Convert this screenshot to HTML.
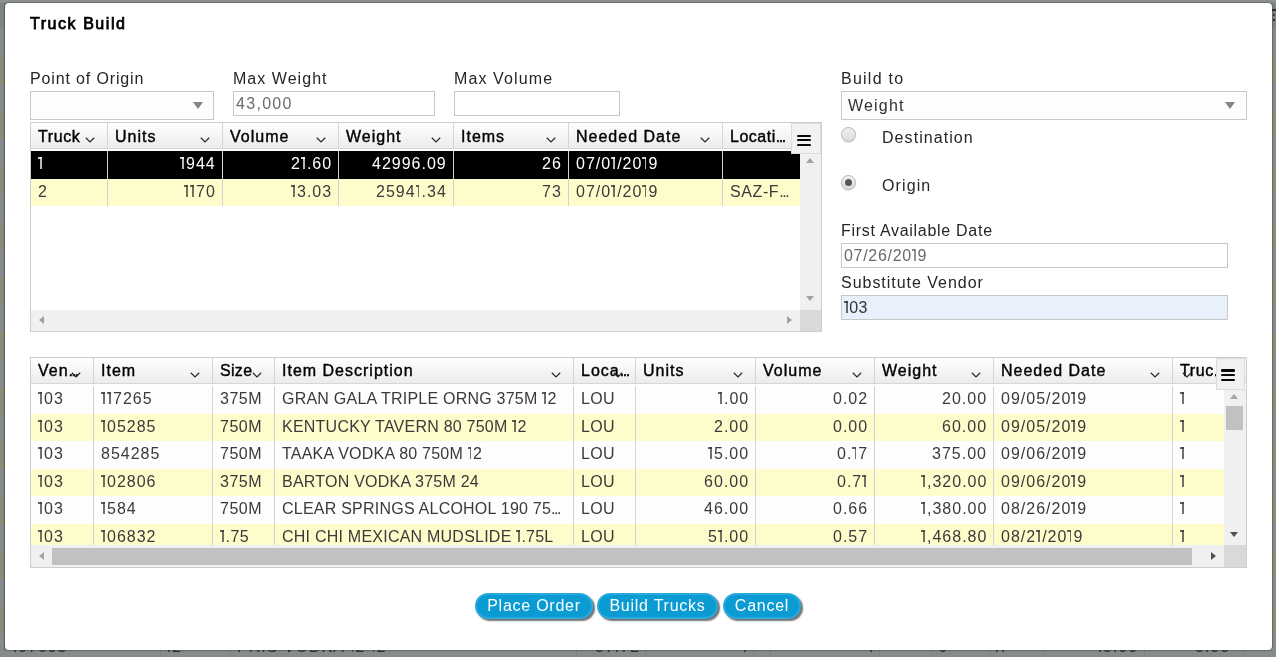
<!DOCTYPE html><html><head><meta charset="utf-8"><title>Truck Build</title><style>
*{box-sizing:border-box;margin:0;padding:0}
html,body{width:1276px;height:657px;overflow:hidden}
body{position:relative;background:#868b8c;font-family:"Liberation Sans", sans-serif;font-size:16px;color:#333}
.abs{position:absolute}
.bgrow{position:absolute;left:0;width:1276px}
.modal{position:absolute;left:5px;top:3px;width:1267px;height:647px;background:#fff;border-radius:4px;box-shadow:0 0 1px 0.5px rgba(40,45,46,.35)}
.t{will-change:transform;position:absolute;white-space:nowrap;line-height:18px;height:18px}
.lbl{color:#262626}
.inp{position:absolute;border:1px solid #c8c8c8;background:#fdfdfd}
.tri{position:absolute;width:0;height:0;border-left:5px solid transparent;border-right:5px solid transparent;border-top:7px solid #858585}
.hd{color:#000;-webkit-text-stroke:0.4px #000;letter-spacing:1.0px}
.sb{position:absolute;background:#f0f0f0}
.menu{position:absolute;background:#f1f1f1;border:1px solid #dcdcdc}
.btn{position:absolute;top:593px;height:26px;border-radius:13px;background:#0a9bd3;border:2px solid #2aa9dc;box-shadow:2px 2px 1.5px rgba(70,70,70,.75);color:#fff;line-height:22px;text-align:center;letter-spacing:0.75px;white-space:nowrap}
.d1{display:inline-block;position:relative;width:5.0px;height:11.6px;margin-right:var(--ls,1px)}
.d1::before{content:'';position:absolute;left:2.2px;top:0;width:1.45px;height:11.6px;background:currentColor;opacity:.72}
.d1::after{content:'';position:absolute;left:0;top:0;width:3.6px;height:1.2px;background:currentColor;opacity:.8}
</style></head><body><div class="bgrow" style="top:0;height:3px;background:#8c9192"></div><div class="bgrow" style="top:3px;height:25.5px;background:#7e8384"></div><div class="bgrow" style="top:28.5px;height:1px;background:#757a7b"></div><div class="bgrow" style="top:29.00px;height:27.5px;background:#868b8c"></div><div class="bgrow" style="top:56.50px;height:27.5px;background:#898b76"></div><div class="bgrow" style="top:84.00px;height:27.5px;background:#868b8c"></div><div class="bgrow" style="top:111.50px;height:27.5px;background:#898b76"></div><div class="bgrow" style="top:139.00px;height:27.5px;background:#868b8c"></div><div class="bgrow" style="top:166.50px;height:27.5px;background:#898b76"></div><div class="bgrow" style="top:194.00px;height:27.5px;background:#868b8c"></div><div class="bgrow" style="top:221.50px;height:27.5px;background:#898b76"></div><div class="bgrow" style="top:249.00px;height:27.5px;background:#868b8c"></div><div class="bgrow" style="top:276.50px;height:27.5px;background:#898b76"></div><div class="bgrow" style="top:304.00px;height:27.5px;background:#868b8c"></div><div class="bgrow" style="top:331.50px;height:27.5px;background:#898b76"></div><div class="bgrow" style="top:359.00px;height:27.5px;background:#868b8c"></div><div class="bgrow" style="top:386.50px;height:27.5px;background:#898b76"></div><div class="bgrow" style="top:414.00px;height:27.5px;background:#868b8c"></div><div class="bgrow" style="top:441.50px;height:27.5px;background:#898b76"></div><div class="bgrow" style="top:469.00px;height:27.5px;background:#868b8c"></div><div class="bgrow" style="top:496.50px;height:27.5px;background:#898b76"></div><div class="bgrow" style="top:524.00px;height:27.5px;background:#868b8c"></div><div class="bgrow" style="top:551.50px;height:27.5px;background:#898b76"></div><div class="bgrow" style="top:579.00px;height:27.5px;background:#868b8c"></div><div class="bgrow" style="top:606.50px;height:27.5px;background:#898b76"></div><div class="bgrow" style="top:634.00px;height:27.5px;background:#868b8c"></div><div class="abs" style="left:4px;top:3px;width:1px;height:648px;background:#6f7475"></div><div class="abs" style="left:160px;top:640px;width:1px;height:17px;background:#7b8081"></div><div class="abs" style="left:230px;top:640px;width:1px;height:17px;background:#7b8081"></div><div class="abs" style="left:576px;top:640px;width:1px;height:17px;background:#7b8081"></div><div class="abs" style="left:645px;top:640px;width:1px;height:17px;background:#7b8081"></div><div class="abs" style="left:753px;top:640px;width:1px;height:17px;background:#7b8081"></div><div class="abs" style="left:770px;top:640px;width:1px;height:17px;background:#7b8081"></div><div class="abs" style="left:879px;top:640px;width:1px;height:17px;background:#7b8081"></div><div class="abs" style="left:932px;top:640px;width:1px;height:17px;background:#7b8081"></div><div class="abs" style="left:990px;top:640px;width:1px;height:17px;background:#7b8081"></div><div class="abs" style="left:1044px;top:640px;width:1px;height:17px;background:#7b8081"></div><div class="abs" style="left:1144px;top:640px;width:1px;height:17px;background:#7b8081"></div><div class="abs" style="left:1244px;top:640px;width:1px;height:17px;background:#7b8081"></div><div class="t" style="left:12px;top:637.7px;color:#2c2f30;letter-spacing:1px;--ls:1px"><span class="d1"></span>07693</div><div class="t" style="left:166px;top:637.7px;color:#2c2f30;letter-spacing:1px;--ls:1px"><span class="d1"></span>2</div><div class="t" style="left:237px;top:637.7px;color:#2c2f30;letter-spacing:1px;--ls:1px">PRIS VODKA <span class="d1"></span>2 <span class="d1"></span>2</div><div class="t" style="right:636px;top:637.7px;color:#2c2f30;letter-spacing:1px;--ls:1px">37.72</div><div class="t" style="right:528px;top:637.7px;color:#2c2f30;letter-spacing:1px;--ls:1px"><span class="d1"></span></div><div class="t" style="right:402px;top:637.7px;color:#2c2f30;letter-spacing:1px;--ls:1px"><span class="d1"></span></div><div class="t" style="left:938px;top:637.7px;color:#2c2f30;letter-spacing:1px;--ls:1px">6</div><div class="t" style="left:994px;top:637.7px;color:#2c2f30;letter-spacing:1px;--ls:1px"><span class="d1"></span><span class="d1"></span></div><div class="t" style="right:138px;top:637.7px;color:#2c2f30;letter-spacing:1px;--ls:1px"><span class="d1"></span>5.00</div><div class="t" style="right:46px;top:637.7px;color:#2c2f30;letter-spacing:1px;--ls:1px">0.00</div><div class="abs" style="left:1272px;top:9px;width:4px;height:2px;background:#2c2f30"></div><div class="abs" style="left:1273px;top:14px;width:2px;height:2px;background:#3c3f40"></div><div class="abs" style="left:1273px;top:19px;width:2px;height:2px;background:#2c2f30"></div><div class="modal"></div><div class="t " style="left:30px;top:14.60px;color:#000;-webkit-text-stroke:0.75px #000;letter-spacing:1.55px">Truck Build</div><div class="t lbl" style="left:30px;top:69.80px;letter-spacing:0.86px">Point of Origin</div><div class="t lbl" style="left:233px;top:69.80px;letter-spacing:1.04px">Max Weight</div><div class="t lbl" style="left:454px;top:69.80px;letter-spacing:1.11px">Max Volume</div><div class="t lbl" style="left:841px;top:69.80px;letter-spacing:1.24px">Build to</div><div class="inp" style="left:30px;top:91px;width:184px;height:29px"></div><div class="tri" style="left:193px;top:102px"></div><div class="inp" style="left:233px;top:91px;width:202px;height:25px;background:#fff"></div><div class="t " style="left:236px;top:95.10px;color:#6a6a6a;letter-spacing:1.3px">43,000</div><div class="inp" style="left:454px;top:91px;width:166px;height:25px;background:#fff"></div><div class="inp" style="left:841px;top:91px;width:406px;height:29px"></div><div class="t lbl" style="left:848px;top:97.10px;color:#333;letter-spacing:1.2px">Weight</div><div class="tri" style="left:1225px;top:102px"></div><div class="abs" style="left:841px;top:127px;width:15px;height:15px;border-radius:50%;border:1px solid #b4b4b4;background:linear-gradient(#f0f0f0,#dcdcdc);box-shadow:0 1px 1px rgba(0,0,0,.12)"></div><div class="abs" style="left:841px;top:175px;width:15px;height:15px;border-radius:50%;border:1px solid #b4b4b4;background:linear-gradient(#f0f0f0,#dcdcdc);box-shadow:0 1px 1px rgba(0,0,0,.12)"></div><div class="abs" style="left:845px;top:179px;width:7px;height:7px;border-radius:50%;background:#555"></div><div class="t lbl" style="left:882px;top:129.30px;letter-spacing:1.06px">Destination</div><div class="t lbl" style="left:882px;top:176.90px;letter-spacing:1.1px">Origin</div><div class="t lbl" style="left:841px;top:222.10px;letter-spacing:0.71px">First Available Date</div><div class="inp" style="left:841px;top:243px;width:387px;height:25px;background:#fff"></div><div class="t " style="left:844px;top:246.80px;color:#6a6a6a;letter-spacing:0.7px;--ls:0.7px">07/26/20<span class="d1"></span>9</div><div class="t lbl" style="left:841px;top:273.90px;letter-spacing:0.97px">Substitute Vendor</div><div class="inp" style="left:841px;top:295px;width:387px;height:25px;background:#e8f0fc"></div><div class="t " style="left:844px;top:298.50px;color:#333;letter-spacing:0.3px;--ls:0.3px"><span class="d1"></span>03</div><div class="abs" style="left:30px;top:122px;width:792px;height:210px;border:1px solid #cdcdcd;background:#fff"></div><div class="abs" style="left:31px;top:123px;width:790px;height:26px;background:linear-gradient(#fefefe,#ececec);border-bottom:1px solid #d7d7d7"></div><div class="t hd" style="left:37.5px;top:127.5px;letter-spacing:0.6px">Truck</div><div class="t hd" style="left:114.5px;top:127.5px;">Units</div><div class="t hd" style="left:229.5px;top:127.5px;">Volume</div><div class="t hd" style="left:345.5px;top:127.5px;">Weight</div><div class="t hd" style="left:460.5px;top:127.5px;">Items</div><div class="t hd" style="left:575.5px;top:127.5px;">Needed Date</div><div class="t hd" style="left:729.5px;top:127.5px;letter-spacing:0.5px">Locati<span style="letter-spacing:-1.45px">...</span></div><div class="abs" style="left:107px;top:123px;width:1px;height:25px;background:#d5d5d5"></div><svg class="abs" style="left:84.5px;top:136.7px" width="10" height="6" viewBox="0 0 10 6"><path d="M0.8 0.8 L5 4.9 L9.2 0.8" fill="none" stroke="#2a2a2a" stroke-width="1.25"/></svg><div class="abs" style="left:222px;top:123px;width:1px;height:25px;background:#d5d5d5"></div><svg class="abs" style="left:199.5px;top:136.7px" width="10" height="6" viewBox="0 0 10 6"><path d="M0.8 0.8 L5 4.9 L9.2 0.8" fill="none" stroke="#2a2a2a" stroke-width="1.25"/></svg><div class="abs" style="left:338px;top:123px;width:1px;height:25px;background:#d5d5d5"></div><svg class="abs" style="left:315.5px;top:136.7px" width="10" height="6" viewBox="0 0 10 6"><path d="M0.8 0.8 L5 4.9 L9.2 0.8" fill="none" stroke="#2a2a2a" stroke-width="1.25"/></svg><div class="abs" style="left:453px;top:123px;width:1px;height:25px;background:#d5d5d5"></div><svg class="abs" style="left:430.5px;top:136.7px" width="10" height="6" viewBox="0 0 10 6"><path d="M0.8 0.8 L5 4.9 L9.2 0.8" fill="none" stroke="#2a2a2a" stroke-width="1.25"/></svg><div class="abs" style="left:568px;top:123px;width:1px;height:25px;background:#d5d5d5"></div><svg class="abs" style="left:545.5px;top:136.7px" width="10" height="6" viewBox="0 0 10 6"><path d="M0.8 0.8 L5 4.9 L9.2 0.8" fill="none" stroke="#2a2a2a" stroke-width="1.25"/></svg><div class="abs" style="left:722px;top:123px;width:1px;height:25px;background:#d5d5d5"></div><svg class="abs" style="left:699.5px;top:136.7px" width="10" height="6" viewBox="0 0 10 6"><path d="M0.8 0.8 L5 4.9 L9.2 0.8" fill="none" stroke="#2a2a2a" stroke-width="1.25"/></svg><div class="abs" style="left:31px;top:151px;width:769px;height:159px;overflow:hidden"><div class="abs" style="left:0;top:0.0px;width:769px;height:27.5px;background:#000000"></div><div class="t" style="left:6.5px;top:4.1px;color:#ffffff;letter-spacing:0px;--ls:0px"><span class="d1"></span></div><div class="t" style="right:584.0px;top:4.1px;color:#ffffff;letter-spacing:1.0px;--ls:1.0px"><span class="d1"></span>944</div><div class="t" style="right:468.0px;top:4.1px;color:#ffffff;letter-spacing:1.0px;--ls:1.0px">2<span class="d1"></span>.60</div><div class="t" style="right:353.0px;top:4.1px;color:#ffffff;letter-spacing:1.0px;--ls:1.0px">42996.09</div><div class="t" style="right:238.0px;top:4.1px;color:#ffffff;letter-spacing:1.0px;--ls:1.0px">26</div><div class="t" style="left:544.5px;top:4.1px;color:#ffffff;letter-spacing:1.0px;--ls:1.0px">07/0<span class="d1"></span>/20<span class="d1"></span>9</div><div class="abs" style="left:0;top:27.5px;width:769px;height:27.5px;background:#fffccc"></div><div class="t" style="left:6.5px;top:31.6px;color:#3a3a3a;letter-spacing:0px;--ls:0px">2</div><div class="t" style="right:584.0px;top:31.6px;color:#3a3a3a;letter-spacing:1.0px;--ls:1.0px"><span class="d1"></span><span class="d1"></span>70</div><div class="t" style="right:468.0px;top:31.6px;color:#3a3a3a;letter-spacing:1.0px;--ls:1.0px"><span class="d1"></span>3.03</div><div class="t" style="right:353.0px;top:31.6px;color:#3a3a3a;letter-spacing:1.0px;--ls:1.0px">2594<span class="d1"></span>.34</div><div class="t" style="right:238.0px;top:31.6px;color:#3a3a3a;letter-spacing:1.0px;--ls:1.0px">73</div><div class="t" style="left:544.5px;top:31.6px;color:#3a3a3a;letter-spacing:1.0px;--ls:1.0px">07/0<span class="d1"></span>/20<span class="d1"></span>9</div><div class="t" style="left:698.5px;top:31.6px;color:#3a3a3a;letter-spacing:0.6px;--ls:0.6px">SAZ-F<span style="letter-spacing:-1.45px">...</span></div><div class="abs" style="left:76px;top:0;width:1px;height:55.0px;background:#d3d3d3"></div><div class="abs" style="left:191px;top:0;width:1px;height:55.0px;background:#d3d3d3"></div><div class="abs" style="left:307px;top:0;width:1px;height:55.0px;background:#d3d3d3"></div><div class="abs" style="left:422px;top:0;width:1px;height:55.0px;background:#d3d3d3"></div><div class="abs" style="left:537px;top:0;width:1px;height:55.0px;background:#d3d3d3"></div><div class="abs" style="left:691px;top:0;width:1px;height:55.0px;background:#d3d3d3"></div></div><div class="sb" style="left:800px;top:153px;width:21px;height:157px"></div><div class="sb" style="left:31px;top:310px;width:769px;height:21px"></div><div class="abs" style="left:800px;top:310px;width:21px;height:21px;background:#d9d9d9"></div><div class="abs" style="left:805.7px;top:158px;width:0;height:0;border-left:4.8px solid transparent;border-right:4.8px solid transparent;border-bottom:5.3px solid #a3a3a3"></div><div class="abs" style="left:805.7px;top:296px;width:0;height:0;border-left:4.8px solid transparent;border-right:4.8px solid transparent;border-top:5.3px solid #a3a3a3"></div><div class="abs" style="left:39px;top:316px;width:0;height:0;border-top:4.75px solid transparent;border-bottom:4.75px solid transparent;border-right:5.5px solid #a0a0a0"></div><div class="abs" style="left:787px;top:316px;width:0;height:0;border-top:4.75px solid transparent;border-bottom:4.75px solid transparent;border-left:5.5px solid #a0a0a0"></div><div class="menu" style="left:791px;top:123px;width:30px;height:31px"></div><div class="abs" style="left:797px;top:134.6px;width:14px;height:2.3px;background:#0a0a0a;border-radius:1.2px"></div><div class="abs" style="left:797px;top:139.0px;width:14px;height:2.3px;background:#0a0a0a;border-radius:1.2px"></div><div class="abs" style="left:797px;top:143.6px;width:14px;height:2.3px;background:#0a0a0a;border-radius:1.2px"></div><div class="abs" style="left:30px;top:357px;width:1217px;height:211px;border:1px solid #cdcdcd;background:#fff"></div><div class="abs" style="left:31px;top:358px;width:1215px;height:26px;background:linear-gradient(#fefefe,#ececec);border-bottom:1px solid #d7d7d7"></div><div class="t hd" style="left:37.5px;top:362.2px;">Ven<span style="letter-spacing:-1.45px">...</span></div><div class="t hd" style="left:100.5px;top:362.2px;">Item</div><div class="t hd" style="left:219.5px;top:362.2px;letter-spacing:0.3px">Size</div><div class="t hd" style="left:281.5px;top:362.2px;">Item Description</div><div class="t hd" style="left:580.5px;top:362.2px;">Loca<span style="letter-spacing:-1.45px">...</span></div><div class="t hd" style="left:642.5px;top:362.2px;">Units</div><div class="t hd" style="left:762.5px;top:362.2px;">Volume</div><div class="t hd" style="left:881.5px;top:362.2px;">Weight</div><div class="t hd" style="left:1000.5px;top:362.2px;">Needed Date</div><div class="t hd" style="left:1179.5px;top:362.2px;letter-spacing:0.6px">Truc.</div><div class="abs" style="left:93px;top:358px;width:1px;height:25px;background:#d5d5d5"></div><svg class="abs" style="left:70.5px;top:371.7px" width="10" height="6" viewBox="0 0 10 6"><path d="M0.8 0.8 L5 4.9 L9.2 0.8" fill="none" stroke="#2a2a2a" stroke-width="1.25"/></svg><div class="abs" style="left:212px;top:358px;width:1px;height:25px;background:#d5d5d5"></div><svg class="abs" style="left:189.5px;top:371.7px" width="10" height="6" viewBox="0 0 10 6"><path d="M0.8 0.8 L5 4.9 L9.2 0.8" fill="none" stroke="#2a2a2a" stroke-width="1.25"/></svg><div class="abs" style="left:274px;top:358px;width:1px;height:25px;background:#d5d5d5"></div><svg class="abs" style="left:251.5px;top:371.7px" width="10" height="6" viewBox="0 0 10 6"><path d="M0.8 0.8 L5 4.9 L9.2 0.8" fill="none" stroke="#2a2a2a" stroke-width="1.25"/></svg><div class="abs" style="left:573px;top:358px;width:1px;height:25px;background:#d5d5d5"></div><svg class="abs" style="left:550.5px;top:371.7px" width="10" height="6" viewBox="0 0 10 6"><path d="M0.8 0.8 L5 4.9 L9.2 0.8" fill="none" stroke="#2a2a2a" stroke-width="1.25"/></svg><div class="abs" style="left:635px;top:358px;width:1px;height:25px;background:#d5d5d5"></div><svg class="abs" style="left:612.5px;top:371.7px" width="10" height="6" viewBox="0 0 10 6"><path d="M0.8 0.8 L5 4.9 L9.2 0.8" fill="none" stroke="#2a2a2a" stroke-width="1.25"/></svg><div class="abs" style="left:755px;top:358px;width:1px;height:25px;background:#d5d5d5"></div><svg class="abs" style="left:732.5px;top:371.7px" width="10" height="6" viewBox="0 0 10 6"><path d="M0.8 0.8 L5 4.9 L9.2 0.8" fill="none" stroke="#2a2a2a" stroke-width="1.25"/></svg><div class="abs" style="left:874px;top:358px;width:1px;height:25px;background:#d5d5d5"></div><svg class="abs" style="left:851.5px;top:371.7px" width="10" height="6" viewBox="0 0 10 6"><path d="M0.8 0.8 L5 4.9 L9.2 0.8" fill="none" stroke="#2a2a2a" stroke-width="1.25"/></svg><div class="abs" style="left:993px;top:358px;width:1px;height:25px;background:#d5d5d5"></div><svg class="abs" style="left:970.5px;top:371.7px" width="10" height="6" viewBox="0 0 10 6"><path d="M0.8 0.8 L5 4.9 L9.2 0.8" fill="none" stroke="#2a2a2a" stroke-width="1.25"/></svg><div class="abs" style="left:1172px;top:358px;width:1px;height:25px;background:#d5d5d5"></div><svg class="abs" style="left:1149.5px;top:371.7px" width="10" height="6" viewBox="0 0 10 6"><path d="M0.8 0.8 L5 4.9 L9.2 0.8" fill="none" stroke="#2a2a2a" stroke-width="1.25"/></svg><div class="abs" style="left:31px;top:386px;width:1193px;height:159px;overflow:hidden"><div class="abs" style="left:0;top:0.0px;width:1193px;height:27.5px;background:#fdfdfd"></div><div class="t" style="left:6.5px;top:4.1px;color:#3a3a3a;letter-spacing:1.0px;--ls:1.0px"><span class="d1"></span>03</div><div class="t" style="left:69.5px;top:4.1px;color:#3a3a3a;letter-spacing:1.0px;--ls:1.0px"><span class="d1"></span><span class="d1"></span>7265</div><div class="t" style="left:188.5px;top:4.1px;color:#3a3a3a;letter-spacing:0.5px;--ls:0.5px">375M</div><div class="t" style="left:250.5px;top:4.1px;color:#3a3a3a;letter-spacing:0.23px;--ls:0.23px">GRAN GALA TRIPLE ORNG 375M <span class="d1"></span>2</div><div class="t" style="left:549.5px;top:4.1px;color:#3a3a3a;letter-spacing:0.3px;--ls:0.3px">LOU</div><div class="t" style="right:475.0px;top:4.1px;color:#3a3a3a;letter-spacing:1.0px;--ls:1.0px"><span class="d1"></span>.00</div><div class="t" style="right:356.0px;top:4.1px;color:#3a3a3a;letter-spacing:1.0px;--ls:1.0px">0.02</div><div class="t" style="right:237.0px;top:4.1px;color:#3a3a3a;letter-spacing:1.0px;--ls:1.0px">20.00</div><div class="t" style="left:969.5px;top:4.1px;color:#3a3a3a;letter-spacing:1.0px;--ls:1.0px">09/05/20<span class="d1"></span>9</div><div class="t" style="left:1148.5px;top:4.1px;color:#3a3a3a;letter-spacing:0px;--ls:0px"><span class="d1"></span></div><div class="abs" style="left:0;top:27.5px;width:1193px;height:27.5px;background:#fffccc"></div><div class="t" style="left:6.5px;top:31.6px;color:#3a3a3a;letter-spacing:1.0px;--ls:1.0px"><span class="d1"></span>03</div><div class="t" style="left:69.5px;top:31.6px;color:#3a3a3a;letter-spacing:1.0px;--ls:1.0px"><span class="d1"></span>05285</div><div class="t" style="left:188.5px;top:31.6px;color:#3a3a3a;letter-spacing:0.5px;--ls:0.5px">750M</div><div class="t" style="left:250.5px;top:31.6px;color:#3a3a3a;letter-spacing:0.23px;--ls:0.23px">KENTUCKY TAVERN 80 750M <span class="d1"></span>2</div><div class="t" style="left:549.5px;top:31.6px;color:#3a3a3a;letter-spacing:0.3px;--ls:0.3px">LOU</div><div class="t" style="right:475.0px;top:31.6px;color:#3a3a3a;letter-spacing:1.0px;--ls:1.0px">2.00</div><div class="t" style="right:356.0px;top:31.6px;color:#3a3a3a;letter-spacing:1.0px;--ls:1.0px">0.00</div><div class="t" style="right:237.0px;top:31.6px;color:#3a3a3a;letter-spacing:1.0px;--ls:1.0px">60.00</div><div class="t" style="left:969.5px;top:31.6px;color:#3a3a3a;letter-spacing:1.0px;--ls:1.0px">09/05/20<span class="d1"></span>9</div><div class="t" style="left:1148.5px;top:31.6px;color:#3a3a3a;letter-spacing:0px;--ls:0px"><span class="d1"></span></div><div class="abs" style="left:0;top:55.0px;width:1193px;height:27.5px;background:#fdfdfd"></div><div class="t" style="left:6.5px;top:59.1px;color:#3a3a3a;letter-spacing:1.0px;--ls:1.0px"><span class="d1"></span>03</div><div class="t" style="left:69.5px;top:59.1px;color:#3a3a3a;letter-spacing:1.0px;--ls:1.0px">854285</div><div class="t" style="left:188.5px;top:59.1px;color:#3a3a3a;letter-spacing:0.5px;--ls:0.5px">750M</div><div class="t" style="left:250.5px;top:59.1px;color:#3a3a3a;letter-spacing:0.23px;--ls:0.23px">TAAKA VODKA 80 750M <span class="d1"></span>2</div><div class="t" style="left:549.5px;top:59.1px;color:#3a3a3a;letter-spacing:0.3px;--ls:0.3px">LOU</div><div class="t" style="right:475.0px;top:59.1px;color:#3a3a3a;letter-spacing:1.0px;--ls:1.0px"><span class="d1"></span>5.00</div><div class="t" style="right:356.0px;top:59.1px;color:#3a3a3a;letter-spacing:1.0px;--ls:1.0px">0.<span class="d1"></span>7</div><div class="t" style="right:237.0px;top:59.1px;color:#3a3a3a;letter-spacing:1.0px;--ls:1.0px">375.00</div><div class="t" style="left:969.5px;top:59.1px;color:#3a3a3a;letter-spacing:1.0px;--ls:1.0px">09/06/20<span class="d1"></span>9</div><div class="t" style="left:1148.5px;top:59.1px;color:#3a3a3a;letter-spacing:0px;--ls:0px"><span class="d1"></span></div><div class="abs" style="left:0;top:82.5px;width:1193px;height:27.5px;background:#fffccc"></div><div class="t" style="left:6.5px;top:86.6px;color:#3a3a3a;letter-spacing:1.0px;--ls:1.0px"><span class="d1"></span>03</div><div class="t" style="left:69.5px;top:86.6px;color:#3a3a3a;letter-spacing:1.0px;--ls:1.0px"><span class="d1"></span>02806</div><div class="t" style="left:188.5px;top:86.6px;color:#3a3a3a;letter-spacing:0.5px;--ls:0.5px">375M</div><div class="t" style="left:250.5px;top:86.6px;color:#3a3a3a;letter-spacing:0.23px;--ls:0.23px">BARTON VODKA 375M 24</div><div class="t" style="left:549.5px;top:86.6px;color:#3a3a3a;letter-spacing:0.3px;--ls:0.3px">LOU</div><div class="t" style="right:475.0px;top:86.6px;color:#3a3a3a;letter-spacing:1.0px;--ls:1.0px">60.00</div><div class="t" style="right:356.0px;top:86.6px;color:#3a3a3a;letter-spacing:1.0px;--ls:1.0px">0.7<span class="d1"></span></div><div class="t" style="right:237.0px;top:86.6px;color:#3a3a3a;letter-spacing:1.0px;--ls:1.0px"><span class="d1"></span>,320.00</div><div class="t" style="left:969.5px;top:86.6px;color:#3a3a3a;letter-spacing:1.0px;--ls:1.0px">09/06/20<span class="d1"></span>9</div><div class="t" style="left:1148.5px;top:86.6px;color:#3a3a3a;letter-spacing:0px;--ls:0px"><span class="d1"></span></div><div class="abs" style="left:0;top:110.0px;width:1193px;height:27.5px;background:#fdfdfd"></div><div class="t" style="left:6.5px;top:114.1px;color:#3a3a3a;letter-spacing:1.0px;--ls:1.0px"><span class="d1"></span>03</div><div class="t" style="left:69.5px;top:114.1px;color:#3a3a3a;letter-spacing:1.0px;--ls:1.0px"><span class="d1"></span>584</div><div class="t" style="left:188.5px;top:114.1px;color:#3a3a3a;letter-spacing:0.5px;--ls:0.5px">750M</div><div class="t" style="left:250.5px;top:114.1px;color:#3a3a3a;letter-spacing:0.23px;--ls:0.23px">CLEAR SPRINGS ALCOHOL 190 75<span style="letter-spacing:-1.45px">...</span></div><div class="t" style="left:549.5px;top:114.1px;color:#3a3a3a;letter-spacing:0.3px;--ls:0.3px">LOU</div><div class="t" style="right:475.0px;top:114.1px;color:#3a3a3a;letter-spacing:1.0px;--ls:1.0px">46.00</div><div class="t" style="right:356.0px;top:114.1px;color:#3a3a3a;letter-spacing:1.0px;--ls:1.0px">0.66</div><div class="t" style="right:237.0px;top:114.1px;color:#3a3a3a;letter-spacing:1.0px;--ls:1.0px"><span class="d1"></span>,380.00</div><div class="t" style="left:969.5px;top:114.1px;color:#3a3a3a;letter-spacing:1.0px;--ls:1.0px">08/26/20<span class="d1"></span>9</div><div class="t" style="left:1148.5px;top:114.1px;color:#3a3a3a;letter-spacing:0px;--ls:0px"><span class="d1"></span></div><div class="abs" style="left:0;top:137.5px;width:1193px;height:27.5px;background:#fffccc"></div><div class="t" style="left:6.5px;top:141.6px;color:#3a3a3a;letter-spacing:1.0px;--ls:1.0px"><span class="d1"></span>03</div><div class="t" style="left:69.5px;top:141.6px;color:#3a3a3a;letter-spacing:1.0px;--ls:1.0px"><span class="d1"></span>06832</div><div class="t" style="left:188.5px;top:141.6px;color:#3a3a3a;letter-spacing:0.5px;--ls:0.5px"><span class="d1"></span>.75</div><div class="t" style="left:250.5px;top:141.6px;color:#3a3a3a;letter-spacing:0.23px;--ls:0.23px">CHI CHI MEXICAN MUDSLIDE <span class="d1"></span>.75L</div><div class="t" style="left:549.5px;top:141.6px;color:#3a3a3a;letter-spacing:0.3px;--ls:0.3px">LOU</div><div class="t" style="right:475.0px;top:141.6px;color:#3a3a3a;letter-spacing:1.0px;--ls:1.0px">5<span class="d1"></span>.00</div><div class="t" style="right:356.0px;top:141.6px;color:#3a3a3a;letter-spacing:1.0px;--ls:1.0px">0.57</div><div class="t" style="right:237.0px;top:141.6px;color:#3a3a3a;letter-spacing:1.0px;--ls:1.0px"><span class="d1"></span>,468.80</div><div class="t" style="left:969.5px;top:141.6px;color:#3a3a3a;letter-spacing:1.0px;--ls:1.0px">08/2<span class="d1"></span>/20<span class="d1"></span>9</div><div class="t" style="left:1148.5px;top:141.6px;color:#3a3a3a;letter-spacing:0px;--ls:0px"><span class="d1"></span></div><div class="abs" style="left:62px;top:0;width:1px;height:159px;background:#d3d3d3"></div><div class="abs" style="left:181px;top:0;width:1px;height:159px;background:#d3d3d3"></div><div class="abs" style="left:243px;top:0;width:1px;height:159px;background:#d3d3d3"></div><div class="abs" style="left:542px;top:0;width:1px;height:159px;background:#d3d3d3"></div><div class="abs" style="left:604px;top:0;width:1px;height:159px;background:#d3d3d3"></div><div class="abs" style="left:724px;top:0;width:1px;height:159px;background:#d3d3d3"></div><div class="abs" style="left:843px;top:0;width:1px;height:159px;background:#d3d3d3"></div><div class="abs" style="left:962px;top:0;width:1px;height:159px;background:#d3d3d3"></div><div class="abs" style="left:1141px;top:0;width:1px;height:159px;background:#d3d3d3"></div></div><div class="sb" style="left:1224px;top:389px;width:22px;height:156px"></div><div class="sb" style="left:31px;top:545px;width:1193px;height:22px"></div><div class="abs" style="left:1224px;top:545px;width:22px;height:22px;background:#d9d9d9"></div><div class="abs" style="left:1226px;top:406px;width:17px;height:24px;background:#c1c1c1"></div><div class="abs" style="left:52px;top:548px;width:1140px;height:17px;background:#c1c1c1"></div><div class="abs" style="left:1230px;top:394px;width:0;height:0;border-left:4.5px solid transparent;border-right:4.5px solid transparent;border-bottom:5px solid #a5a5a5"></div><div class="abs" style="left:1230px;top:532px;width:0;height:0;border-left:4.5px solid transparent;border-right:4.5px solid transparent;border-top:5px solid #505050"></div><div class="abs" style="left:39px;top:552px;width:0;height:0;border-top:4.5px solid transparent;border-bottom:4.5px solid transparent;border-right:5px solid #a5a5a5"></div><div class="abs" style="left:1211px;top:552px;width:0;height:0;border-top:4.5px solid transparent;border-bottom:4.5px solid transparent;border-left:5px solid #505050"></div><div class="menu" style="left:1216px;top:358px;width:29px;height:32px"></div><div class="abs" style="left:1221px;top:369.3px;width:14px;height:2.3px;background:#0a0a0a;border-radius:1.2px"></div><div class="abs" style="left:1221px;top:373.9px;width:14px;height:2.3px;background:#0a0a0a;border-radius:1.2px"></div><div class="abs" style="left:1221px;top:378.5px;width:14px;height:2.3px;background:#0a0a0a;border-radius:1.2px"></div><svg class="abs" style="left:1182px;top:372px" width="10" height="6" viewBox="0 0 10 6"><path d="M0.8 0.8 L5 4.9 L9.2 0.8" fill="none" stroke="#2a2a2a" stroke-width="1.25"/></svg><div class="btn" style="left:475px;width:118px">Place Order</div><div class="btn" style="left:597px;width:121px">Build Trucks</div><div class="btn" style="left:723px;width:78px">Cancel</div></body></html>
